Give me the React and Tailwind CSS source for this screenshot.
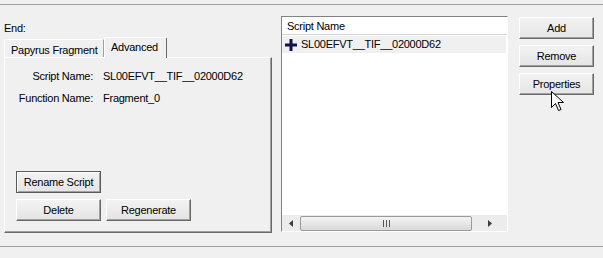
import React from 'react';

// Classic Windows-style push button
function WinButton({ children, isDefault, className = '' }) {
  const edge = isDefault
    ? 'border border-[#5a5a5a] shadow-[inset_1px_1px_0_#ffffff,inset_-1px_-1px_0_#a0a0a0]'
    : 'border border-t-white border-l-white border-r-[#696969] border-b-[#696969] shadow-[inset_-1px_-1px_0_#a0a0a0]';
  return (
    <div
      className={`h-[22px] flex items-center justify-center bg-gradient-to-b from-[#f3f3f3] to-[#e4e4e4] ${edge} ${className}`}
    >
      {children}
    </div>
  );
}

function PlusIcon() {
  return (
    <svg width="12" height="12" viewBox="0 0 12 12" className="shrink-0">
      <rect x="4.5" y="0" width="3" height="12" fill="#12124a" />
      <rect x="0" y="4.5" width="12" height="3" fill="#12124a" />
    </svg>
  );
}

function Cursor() {
  return (
    <svg
      width="14"
      height="21"
      viewBox="0 0 14 21"
      className="absolute left-[551px] top-[91px]"
    >
      <path
        d="M0.5 0.5 L0.5 16.5 L4.5 12.5 L7.5 19.5 L10 18.5 L7 11.5 L12.5 11.5 Z"
        fill="white"
        stroke="black"
        strokeWidth="1"
        strokeLinejoin="miter"
      />
    </svg>
  );
}

export default function App() {
  return (
    <div className="relative w-[603px] h-[258px] bg-[#f0f0f0] overflow-hidden font-['Liberation_Sans',sans-serif] text-[11px] leading-[13px] tracking-[-0.25px] text-black">
      <div className="h-[4px]" />
      <div className="border-t border-[#a0a0a0] h-[242px] flex">
        {/* left: tab control */}
        <div className="w-[281px] shrink-0 pl-[4px] flex flex-col">
          <div className="mt-[17px] h-[13px]">End:</div>
          <div className="mt-[1px] h-[21px] flex items-end">
            <div className="h-[18px] w-[100px] border-t border-l border-white border-r border-r-[#a0a0a0] pl-[6px] pt-[4px] rounded-tl-[2px]">
              Papyrus Fragment
            </div>
            <div className="h-[21px] w-[63px] border-t border-l border-white border-r border-r-[#696969] pl-[6px] pt-[3px] rounded-t-[2px] -mb-[1px] relative z-10 bg-[#f0f0f0]">
              Advanced
            </div>
          </div>
          <div className="h-[176px] w-[268px] border border-t-white border-l-white border-r-[#696969] border-b-[#696969] shadow-[inset_-1px_-1px_0_#a0a0a0] flex flex-col pb-[11px]">
            <div className="mt-[12px] flex h-[13px] whitespace-nowrap">
              <div className="w-[88px] shrink-0 text-right">Script Name:</div>
              <div className="ml-[10px]">SL00EFVT__TIF__02000D62</div>
            </div>
            <div className="mt-[9px] flex h-[13px] whitespace-nowrap">
              <div className="w-[88px] shrink-0 text-right">Function Name:</div>
              <div className="ml-[10px]">Fragment_0</div>
            </div>
            <div className="mt-auto pl-[11px] flex flex-col gap-[6px]">
              <WinButton isDefault className="w-[85px]">Rename Script</WinButton>
              <div className="flex gap-[5px]">
                <WinButton className="w-[85px]">Delete</WinButton>
                <WinButton className="w-[85px]">Regenerate</WinButton>
              </div>
            </div>
          </div>
        </div>

        {/* middle: list view */}
        <div className="mt-[11px] w-[227px] shrink-0 h-[216px] border border-t-[#828282] border-l-[#828282] border-r-white border-b-white bg-white flex flex-col">
          <div className="h-[18px] border-b border-[#d5d5d5] flex items-center pl-[5px] pt-[1px]">
            Script Name
          </div>
          <div className="mt-[1px] h-[17px] mr-[1px] bg-[#f0f0f0] flex items-center pl-[3px] gap-[4px]">
            <PlusIcon />
            <span>SL00EFVT__TIF__02000D62</span>
          </div>
          <div className="flex-1" />
          {/* horizontal scrollbar */}
          <div className="h-[16px] bg-[#ececec] flex items-center">
            <div className="w-[17px] flex items-center justify-center">
              <svg width="4" height="7" viewBox="0 0 4 7">
                <path d="M4 0 L0 3.5 L4 7 Z" fill="#3c3c3c" />
              </svg>
            </div>
            <div className="w-[172px] h-[15px] ml-[1px] rounded-[2px] border border-[#9a9a9a] bg-gradient-to-b from-[#f4f4f4] to-[#d9d9d9] flex items-center justify-center gap-[2px]">
              <div className="w-[1px] h-[7px] bg-[#555]" />
              <div className="w-[1px] h-[7px] bg-[#555]" />
              <div className="w-[1px] h-[7px] bg-[#555]" />
            </div>
            <div className="flex-1 flex items-center justify-center">
              <svg width="4" height="7" viewBox="0 0 4 7">
                <path d="M0 0 L4 3.5 L0 7 Z" fill="#3c3c3c" />
              </svg>
            </div>
          </div>
        </div>

        {/* right: buttons */}
        <div className="ml-[11px] mt-[12px] flex flex-col gap-[6px]">
          <WinButton className="w-[75px]">Add</WinButton>
          <WinButton className="w-[75px]">Remove</WinButton>
          <WinButton className="w-[75px]">Properties</WinButton>
        </div>
      </div>
      <div className="border-t border-[#a0a0a0]" />
      <Cursor />
    </div>
  );
}
